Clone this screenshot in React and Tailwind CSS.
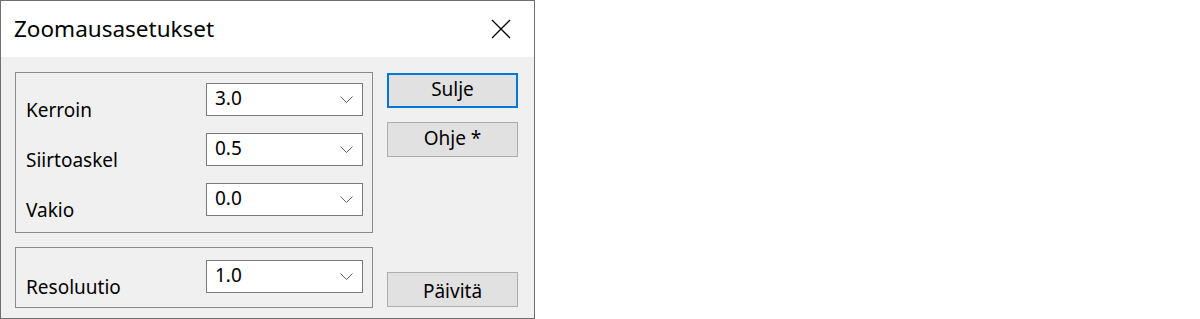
import React from 'react';

const font = { fontFamily: '"Noto Sans", "Open Sans", sans-serif' };

const Chevron = () => (
  <svg width="13" height="8" viewBox="0 0 13 8" className="shrink-0">
    <path d="M0.5 0.5 L6.5 6.5 L12.5 0.5" fill="none" stroke="#606060" strokeWidth="1" />
  </svg>
);

const Combo = ({ value }) => (
  <div className="flex items-center justify-between w-[157px] h-[33px] bg-white border border-[#7a7a7a] pl-[8px] pr-[9px]">
    <span className="text-[19px] text-black leading-none pb-[3px]">{value}</span>
    <Chevron />
  </div>
);

const Row = ({ label, value }) => (
  <div className="flex items-center h-[33px]">
    <div className="w-[190px] pl-[10px] pt-[21px] text-[19px] text-black leading-none">{label}</div>
    <Combo value={value} />
  </div>
);

const Button = ({ children, active, low }) => (
  <button
    className={
      'w-[131px] h-[35px] bg-[#e1e1e1] text-[19px] text-black leading-none flex items-center justify-center ' +
      (low ? 'pt-[3px] ' : 'pb-[2px] ') +
      (active ? 'border-2 border-[#0078d7]' : 'border border-[#adadad]')
    }
  >
    {children}
  </button>
);

const App = () => {
  return (
    <div className="w-[1200px] h-[319px] bg-white" style={font}>
      <div className="w-[535px] h-[319px] border border-[#6f6f6f] flex flex-col">
        <div className="h-[56px] bg-white flex items-center justify-between pl-[13px] pr-[23px]">
          <span className="text-[22.5px] text-black leading-none pt-[1px]">Zoomausasetukset</span>
          <svg width="20" height="20" viewBox="0 0 20 20">
            <path d="M1 1 L19 19 M19 1 L1 19" stroke="#000" strokeWidth="1.3" />
          </svg>
        </div>
        <div className="flex-1 bg-[#f0f0f0] flex pl-[14px] pt-[15px]">
          <div className="flex flex-col w-[358px]">
            <div className="h-[161px] border border-[#8a8a8a] pt-[10px] flex flex-col gap-[17px]">
              <Row label="Kerroin" value="3.0" />
              <Row label="Siirtoaskel" value="0.5" />
              <Row label="Vakio" value="0.0" />
            </div>
            <div className="mt-[14px] h-[61px] border border-[#8a8a8a] pt-[12px]">
              <Row label="Resoluutio" value="1.0" />
            </div>
          </div>
          <div className="ml-[14px] pt-[1px] flex flex-col">
            <Button active>Sulje</Button>
            <div className="mt-[14px]">
              <Button>Ohje *</Button>
            </div>
            <div className="mt-[115px]">
              <Button low>Päivitä</Button>
            </div>
          </div>
        </div>
      </div>
    </div>
  );
};

export default App;
